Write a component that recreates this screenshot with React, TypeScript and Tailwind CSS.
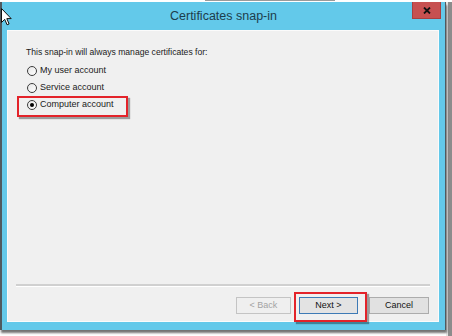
import React, { useState } from 'react';

const FONT = { fontFamily: '"Liberation Sans", Arial, sans-serif' };

function Radio({ checked }: { checked?: boolean }) {
  return (
    <span className="w-[10px] h-[10px] rounded-full border border-[#3c3c3c] bg-gradient-to-br from-[#e6e6e6] to-white flex items-center justify-center shrink-0">
      {checked && <span className="w-[4px] h-[4px] rounded-full bg-black" />}
    </span>
  );
}

function Cursor() {
  return (
    <svg width="11" height="18" viewBox="0 0 11 18" className="absolute left-[1px] top-[8px]">
      <path d="M0.5 0.5 L0.5 14.5 L3.7 11.3 L6.1 16.8 L8.1 16 L5.8 10.6 L10.2 10.6 Z" fill="#fff" stroke="#111" strokeWidth="1" strokeLinejoin="round" />
    </svg>
  );
}

export default function App() {
  const [choice, setChoice] = useState('computer');
  const options = [
    { id: 'user', label: 'My user account' },
    { id: 'service', label: 'Service account' },
    { id: 'computer', label: 'Computer account' },
  ];

  return (
    <div className="w-[452px] h-[336px] bg-white relative overflow-hidden" style={FONT}>
      {/* edge of the window behind */}
      <div className="h-[2px] flex">
        <div className="ml-[205px] w-[130px] h-[1px] bg-[#9a9a9a]" />
      </div>

      <div className="flex">
        {/* Dialog window */}
        <div className="w-[446px] h-[328px] bg-[#63c9ea] border-l-2 border-r border-[#4f5a60] flex flex-col relative shadow-[1px_3px_2px_rgba(0,0,0,0.55)]">
          {/* Title bar */}
          <div className="h-[28px] flex items-center justify-center shrink-0">
            <span className="text-[12.5px] text-[#1d3d4c] pt-[1px]">Certificates snap-in</span>
          </div>
          <div className="absolute right-[4px] top-0 w-[29px] h-[17px] bg-[#c75050] border border-[#a84040] border-t-0 flex items-center justify-center">
            <svg width="8" height="7" viewBox="0 0 8 7">
              <path d="M1 0.5 L7 6.5 M7 0.5 L1 6.5" stroke="#111" strokeWidth="1.8" />
            </svg>
          </div>

          {/* Client area */}
          <div className="ml-[5px] mr-[6px] h-[292px] bg-[#f0f0f0] border border-[#fbfbfb] flex flex-col relative text-[#1a1a1a]">
            <div className="pl-[18px] pt-[16px] leading-[10px] text-[8.6px]">This snap-in will always manage certificates for:</div>

            <div className="mt-[5px] pl-[19px] flex flex-col">
              {options.map((o) => (
                <label
                  key={o.id}
                  onClick={() => setChoice(o.id)}
                  className="h-[17px] flex items-center gap-[3px] cursor-default"
                >
                  <Radio checked={choice === o.id} />
                  <span className="text-[9px]">{o.label}</span>
                </label>
              ))}
            </div>

            {/* red annotation box around Computer account */}
            <div className="absolute left-[9px] top-[65px] w-[111px] h-[21px] border-2 border-[#e3232a] shadow-[2px_2px_1px_rgba(0,0,0,0.35)]" />

            <div className="flex-1" />

            <div className="mx-[8px] border-t-2 border-[#d0d0d0] border-b border-b-white" />

            <div className="mt-[10px] mb-[7px] pr-[9px] flex justify-end items-center text-[9px]">
              <button className="w-[55px] h-[17px] bg-[#efefef] border border-[#c4c4c4] text-[#a3a3a3]">&lt; Back</button>
              <button className="ml-[8px] w-[59px] h-[17px] bg-[#e3e3e3] border border-[#3d7ab5] text-[#111]">Next &gt;</button>
              <button className="ml-[11px] w-[60px] h-[17px] bg-[#e1e1e1] border border-[#acacac] text-[#111]">Cancel</button>
            </div>

            {/* red annotation box around Next */}
            <div className="absolute left-[286px] top-[261px] w-[73px] h-[30px] border-2 border-[#e3232a] shadow-[2px_2px_1px_rgba(0,0,0,0.35)]" />
          </div>
        </div>

        {/* window behind, right side */}
        <div className="flex h-[336px]">
          <div className="w-[2px] bg-[#e6e6e6]" />
          <div className="w-[4px] bg-[#8c8c8c]" />
        </div>
      </div>

      <Cursor />
    </div>
  );
}
